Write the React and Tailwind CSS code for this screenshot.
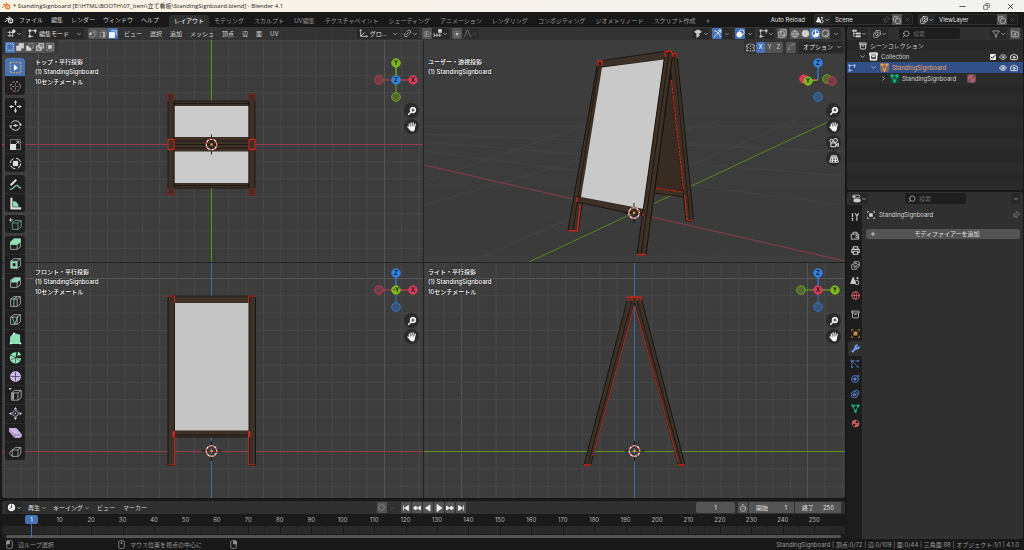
import React from 'react';
import {
  Archive, Camera, Check, ChevronDown, ChevronRight, Circle, Copy, Eye, Filter, Globe, Images,
  Magnet, Minus, Pin, Plus, Printer, Search, Timer, Wrench, X, FolderPlus, Spline, Link2,
} from 'lucide-react';

const GRID = 17.3;

const Chevron = ({ className = 'text-[#b5b5b5]' }) => (
  <ChevronDown className={`w-[6px] h-[6px] shrink-0 ${className}`} strokeWidth={3} />
);

/* Small svg wrapper, 16 unit canvas */
const Ico = ({ children, className = 'w-[10px] h-[10px]' }) => (
  <svg viewBox="0 0 16 16" className={`shrink-0 ${className}`} fill="none" stroke="currentColor" strokeWidth="1.4">
    {children}
  </svg>
);

const BlenderLogo = ({ className }) => (
  <svg viewBox="0 0 24 20" className={className} fill="none">
    <path d="M1 14 L12 6 H4.500 M10 1.500 L20 9" stroke="currentColor" strokeWidth="2.600" strokeLinecap="round" strokeLinejoin="round" />
    <circle cx="15" cy="12" r="5.500" stroke="currentColor" strokeWidth="3" />
    <circle cx="15" cy="12" r="1.900" fill="currentColor" />
  </svg>
);

const MenuButton = ({ children }) => (
  <button type="button" className="px-1 leading-3 whitespace-nowrap text-[#d5d5d5]">{children}</button>
);

const IconButton = ({ label, active, lit, children, className = 'w-[10px]' }) => (
  <button
    type="button"
    aria-label={label}
    className={`flex items-center justify-center h-[11px] shrink-0 rounded-[1px] ${className} ${
      active ? 'bg-[#4772b3] text-white' : lit ? 'bg-[#545454] text-[#cfcfcf]' : 'text-[#cfcfcf]'
    }`}
  >
    {children}
  </button>
);

const Dropdown = ({ label, icon, value, width }) => (
  <label className="flex items-center h-[11px] gap-[2px] px-[2px] rounded-[2px] bg-[#282828]">
    <span className="sr-only">{label}</span>
    {icon}
    <select className={`appearance-none h-[11px] bg-transparent outline-none text-[#e0e0e0] leading-[11px] ${width}`}>
      <option>{value}</option>
    </select>
    <Chevron />
  </label>
);

const SearchBox = ({ id }) => (
  <label htmlFor={id} className="flex items-center gap-[3px] w-[61px] h-[11px] px-[3px] rounded-[2px] bg-[#1d1d1d]">
    <Search className="w-[8px] h-[8px] shrink-0 text-[#c8c8c8] -scale-x-100" />
    <input id={id} type="text" aria-label="検索" placeholder="検索" className="w-full min-w-0 bg-transparent outline-none leading-[10px] placeholder:text-[#666]" />
  </label>
);

/* ---------- title bar and top bar ---------- */

const TitleBar = () => (
  <header className="flex items-center shrink-0 h-3 pl-[2px] bg-linear-to-r from-[#fcf3e2] via-[#f6f1ec] to-[#f2f3ef] text-[#222]">
    <BlenderLogo className="w-[9px] h-[8px] text-[#e0782a]" />
    <h1 className="ml-[2px] text-[6px] leading-3 whitespace-pre font-['Open_Sans','Noto_Sans_CJK_JP',sans-serif]">
      {'* StandingSignboard [E:\\HTML\\BOOTH\\07_Item\\立て看板\\StandingSignboard.blend] - Blender 4.1'}
    </h1>
    <div className="flex items-center gap-4 ml-auto mr-[9px]">
      <button type="button" aria-label="最小化"><Minus className="w-[9px] h-[9px]" /></button>
      <button type="button" aria-label="元に戻す"><Copy className="w-[7px] h-[7px] -scale-x-100" /></button>
      <button type="button" aria-label="閉じる"><X className="w-[9px] h-[9px]" /></button>
    </div>
  </header>
);

const WORKSPACES = [
  'レイアウト', 'モデリング', 'スカルプト', 'UV編集', 'テクスチャペイント', 'シェーディング',
  'アニメーション', 'レンダリング', 'コンポジティング', 'ジオメトリノード', 'スクリプト作成',
];

const SceneIcon = ({ className }) => (
  <Ico className={className}>
    <path d="M5 2 L9 12 H1 Z" fill="currentColor" />
    <circle cx="11" cy="10.500" r="3.300" />
    <circle cx="12" cy="3.500" r="1.200" fill="currentColor" />
  </Ico>
);

const IdBlock = ({ id, value, icon, width, pinned }) => (
  <div className="flex items-center h-[11px] rounded-[2px] bg-[#1d1d1d] border border-[#303030]">
    <button type="button" aria-label={`${value} を選択`} className="flex items-center w-4 h-full justify-center text-white bg-[#282828]">
      {icon}<Chevron />
    </button>
    <input id={id} aria-label={value} defaultValue={value} className={`pl-1 bg-transparent outline-none text-[#e0e0e0] leading-[9px] ${width}`} />
    {pinned && <Pin className="w-[8px] h-[8px] mr-[2px] rotate-45 text-[#666]" />}
    <IconButton label="複製" lit><Copy className="w-[8px] h-[8px]" /></IconButton>
    <IconButton label="削除"><X className="w-[7px] h-[7px] text-[#5a5a5a]" /></IconButton>
  </div>
);

const TopBar = () => (
  <div className="flex items-center shrink-0 h-[15px] bg-[#181818]">
    <BlenderLogo className="w-[9px] h-[8px] ml-[5px] mr-px text-[#e6e6e6]" />
    <nav className="flex items-center">
      {['ファイル', '編集', 'レンダー', 'ウィンドウ', 'ヘルプ'].map((m) => <MenuButton key={m}>{m}</MenuButton>)}
    </nav>
    <nav className="flex items-end h-full ml-[6px]">
      {WORKSPACES.map((w, i) => (
        <button
          key={w}
          type="button"
          className={`h-[12px] px-[5px] leading-3 rounded-t-[2px] whitespace-nowrap ${i === 0 ? 'bg-[#303030] text-white' : 'text-[#989898]'}`}
        >
          {w}
        </button>
      ))}
      <button type="button" aria-label="ワークスペースを追加" className="px-1 h-[12px] text-[#989898]"><Plus className="w-[6px] h-[6px]" /></button>
    </nav>
    <div className="flex items-center gap-[5px] ml-auto mr-[6px]">
      <button type="button" className="mr-1 whitespace-nowrap text-[#e0e0e0]">Auto Reload</button>
      <IdBlock id="scene" value="Scene" width="w-[51px]" pinned icon={<SceneIcon className="w-[8px] h-[8px]" />} />
      <IdBlock id="layer" value="ViewLayer" width="w-[62px]" icon={<Images className="w-[8px] h-[8px]" />} />
    </div>
  </div>
);

/* ---------- viewport header ---------- */

const SelectBoxIcon = ({ kind }) => (
  <Ico className="w-[8px] h-[8px]">
    {kind === 0 && <rect x="1.500" y="1.500" width="13" height="13" strokeDasharray="2 1.500" />}
    {kind === 1 && <path d="M6 1 H15 V10 H10 V15 H1 V6 H6 Z" fill="currentColor" />}
    {kind === 2 && <><path d="M6 1.500 H14.500 V10 H10" strokeDasharray="2 1.500" /><path d="M1 6 H6 V10 H10 V15 H1 Z" fill="currentColor" /></>}
    {kind === 3 && <path d="M6 1.500 H14.500 V10 H10 V14.500 H1.500 V6 H6 Z M6 6 H10 V10 H6 Z" strokeWidth="2.400" />}
    {kind === 4 && <><rect x="1.500" y="1.500" width="13" height="13" strokeDasharray="2 2" /><rect x="5" y="5" width="6" height="6" fill="currentColor" /></>}
  </Ico>
);

const EditIcon = ({ className = 'w-[9px] h-[9px]' }) => (
  <Ico className={className}>
    <path d="M4 3 H12 M4 13 H9 M3 4 V12 M13 4 V8" />
    <path d="M1 1 H5 V5 H1 Z M11 1 H15 V5 H11 Z M1 11 H5 V15 H1 Z" fill="currentColor" stroke="none" />
  </Ico>
);

const ViewportHeader = () => (
  <div className="absolute inset-x-0 top-0">
    <div className="flex items-center h-[13px] px-1 rounded-t-[3px] bg-[#303030]/75">
      <button type="button" aria-label="エディタータイプ" className="flex items-center justify-center w-[16px] h-[11px] rounded-[2px] bg-[#282828] text-[#e0e0e0]">
        <Ico className="w-[9px] h-[9px]"><path d="M1 6 H12 M1 12 H11 M5 3 V14 M10 5 V14" /><circle cx="12" cy="4" r="2.500" fill="currentColor" /></Ico>
        <Chevron />
      </button>
      <div className="mx-1 text-[#e0e0e0]">
        <Dropdown label="モード" icon={<EditIcon />} width="w-[35px]" value="編集モード" />
      </div>
      <div className="flex rounded-[2px] bg-[#545454]">
        <IconButton label="頂点選択"><Ico className="w-[8px] h-[8px]"><path d="M2 5 H11 V14 H2 Z M5 2 H14 V11" opacity="0.5" /><rect x="1" y="6" width="4" height="4" fill="currentColor" stroke="none" /></Ico></IconButton>
        <IconButton label="辺選択"><Ico className="w-[8px] h-[8px]"><path d="M2 5 H10 V14 H2 Z M4 2 H14 V11 L10 14" opacity="0.5" /><path d="M10 4 V15" strokeWidth="2.600" /></Ico></IconButton>
        <IconButton label="面選択" active><Ico className="w-[8px] h-[8px]"><path d="M1 5 H11 V15 H1 Z" fill="currentColor" /><path d="M4 1.500 H14.500 V11" /></Ico></IconButton>
      </div>
      <nav className="flex ml-[2px]">
        {['ビュー', '選択', '追加', 'メッシュ', '頂点', '辺', '面', 'UV'].map((m) => <MenuButton key={m}>{m}</MenuButton>)}
      </nav>

      <div className="flex items-center gap-[3px] ml-[74px]">
        <Dropdown
          label="座標系"
          width="w-[20px]"
          icon={<Ico className="w-[9px] h-[9px] text-[#e0e0e0]"><path d="M3 1 V13 H15 M3 13 L10 6 M1 3 L3 1 L5 3 M13 11 L15 13 L13 15" /></Ico>}
          value="グロ..."
        />
        <IconButton label="ピボット" className="w-[16px] bg-[#282828]"><Link2 className="w-[9px] h-[9px] -rotate-45" /><Chevron /></IconButton>
        <div className="flex">
          <IconButton label="スナップ" lit><Magnet className="w-[8px] h-[8px] rotate-45 text-[#999]" /></IconButton>
          <IconButton label="スナップ先" className="w-[17px] bg-[#282828]">
            <Ico className="w-[9px] h-[9px]"><path d="M1 11 H15 M2 7 V14 M7 8 V14 M12 8 V14" /><rect x="10" y="1" width="5" height="5" fill="currentColor" /></Ico>
            <Chevron />
          </IconButton>
        </div>
        <div className="flex">
          <IconButton label="プロポーショナル編集" lit><Ico className="w-[8px] h-[8px]"><circle cx="8" cy="8" r="6" opacity="0.4" /><circle cx="8" cy="8" r="2.200" fill="currentColor" /></Ico></IconButton>
          <IconButton label="減衰" className="w-[17px] bg-[#2c2c2c]"><Ico className="w-[9px] h-[9px] text-[#888]"><path d="M1 14 C6 14 5 2 8 2 C11 2 10 14 15 14" /></Ico><Chevron className="text-[#555]" /></IconButton>
        </div>
      </div>

      <div className="flex items-center gap-[3px] ml-auto">
        <IconButton label="表示と選択" className="w-[16px] bg-[#282828]">
          <Ico className="w-[9px] h-[9px]"><path d="M1 5 C4 1 10 1 13 5 C10 9 4 9 1 5 Z" fill="currentColor" /><path d="M5 8 L5 15 L10 11 Z" fill="currentColor" /></Ico><Chevron />
        </IconButton>
        <div className="flex">
          <IconButton label="ギズモ" active><Ico className="w-[9px] h-[9px]"><path d="M2 3 C8 4 12 8 13 14 M2 14 L14 2 M9 2 H14 V7" /></Ico></IconButton>
          <IconButton label="ギズモ設定" className="w-[10px] bg-[#282828]"><Chevron /></IconButton>
        </div>
        <div className="flex">
          <IconButton label="オーバーレイ" active><Ico className="w-[9px] h-[9px]"><circle cx="6" cy="10" r="4.500" fill="currentColor" /><circle cx="10" cy="6" r="4.500" /></Ico></IconButton>
          <IconButton label="オーバーレイ設定" className="w-[10px] bg-[#282828]"><Chevron /></IconButton>
        </div>
        <IconButton label="メッシュ表示" className="w-[16px] bg-[#282828]"><EditIcon /><Chevron /></IconButton>
        <IconButton label="透過" lit><Ico className="w-[9px] h-[9px]"><path d="M1.500 5 H11 V14.500 H1.500 Z M5 1.500 H14.500 V11 H5 Z" /></Ico></IconButton>
        <div className="flex">
          <IconButton label="ワイヤーフレーム" lit><Globe className="w-[8px] h-[8px]" /></IconButton>
          <IconButton label="ソリッド" lit><Ico className="w-[9px] h-[9px]"><circle cx="8" cy="8" r="6" fill="currentColor" /></Ico></IconButton>
          <IconButton label="マテリアル" active><Ico className="w-[9px] h-[9px]"><circle cx="8" cy="8" r="6" /><path d="M8 2 V8 H14 A6 6 0 0 1 4 12.500 L8 8 Z" fill="currentColor" /></Ico></IconButton>
          <IconButton label="レンダー" lit><Ico className="w-[9px] h-[9px]"><circle cx="8" cy="8" r="6" /><path d="M11 8 A3.500 3.500 0 0 1 7 12" /></Ico></IconButton>
          <IconButton label="シェーディング設定" className="w-[11px] bg-[#282828]"><Chevron /></IconButton>
        </div>
      </div>
    </div>

    <div className="flex items-center justify-between h-[14px]">
      <div className="flex items-center h-full px-[3px] rounded-br-[3px] bg-[#303030]/75">
        <div className="flex rounded-[2px] bg-[#545454]">
          {[0, 1, 2, 3, 4].map((k) => (
            <IconButton key={k} label={`選択モード ${k + 1}`} active={k === 0}><SelectBoxIcon kind={k} /></IconButton>
          ))}
        </div>
      </div>
      <div className="flex items-center h-full gap-[3px] px-[2px] rounded-bl-[3px] bg-[#303030]/75">
        <div className="flex">
          <IconButton label="ミラー"><Ico className="w-[9px] h-[9px]"><path d="M8 1 V15" strokeDasharray="2 2" /><path d="M6 2 L1 4 V7 L4 8 L1 11 V14 H6 M10 2 L15 4 V7 L12 8 L15 11 V14 H10" /></Ico></IconButton>
          <IconButton label="X" active className="w-[9px]">X</IconButton>
          <IconButton label="Y" lit className="w-[9px]">Y</IconButton>
          <IconButton label="Z" lit className="w-[9px]">Z</IconButton>
        </div>
        <IconButton label="自動マージ" lit><Spline className="w-[8px] h-[8px] text-[#999]" /></IconButton>
        <button type="button" className="flex items-center gap-[3px] h-[11px] pl-1 pr-px rounded-[2px] bg-[#282828] text-[#e0e0e0]">オプション<Chevron /></button>
      </div>
    </div>
  </div>
);

/* ---------- tool shelf ---------- */

const cubePath = 'M2 5 H10 V14 H2 Z M2 5 L6 2 H14 V11 L10 14 M10 5 L14 2';
const Cube = () => <path d={cubePath} stroke="#b4b4b4" strokeWidth="1" />;
const G = '#8fe0b4';
const P = '#cdb8e8';

const TOOL_GROUPS = [
  {
    height: 'h-[37px]',
    tools: [
      ['ボックス選択', <><rect x="1.500" y="1.500" width="13" height="13" stroke="#e0b060" strokeDasharray="2 1.300" /><path d="M6 4 L11 8.500 L6 12 Z" fill="#fff" stroke="none" /></>],
      ['カーソル', <><circle cx="8" cy="8" r="6" stroke="#d9a0a0" strokeWidth="1.200" strokeDasharray="2.700 2" /><path d="M8 4 V7 M8 9 V12 M4 8 H7 M9 8 H12" stroke="#999" strokeWidth="0.900" /></>],
    ],
  },
  {
    height: 'h-[74px]',
    tools: [
      ['移動', <><path d="M8 3 V6 M8 10 V13 M3 8 H6 M10 8 H13" /><path d="M8 0 L10 3.500 H6 Z M8 16 L10 12.500 H6 Z M0 8 L3.500 6 V10 Z M16 8 L12.500 6 V10 Z" fill="currentColor" stroke="none" /></>],
      ['回転', <><circle cx="8" cy="8" r="6" strokeWidth="1.100" strokeDasharray="14 4.800" strokeDashoffset="-2" /><path d="M5 8 H11" strokeWidth="1" /><circle cx="8" cy="8" r="1.500" fill="currentColor" stroke="none" /><path d="M0 8 L4 8 L2 11 Z M12 8 H16 L14 5 Z" fill="currentColor" stroke="none" /></>],
      ['スケール', <><rect x="2" y="2" width="12" height="12" stroke="#888" strokeWidth="1" /><path d="M2 8 H8 V14 H2 Z" fill="currentColor" /><path d="M8 8 L12 4 M9 4 H12 V7" strokeWidth="1" /></>],
      ['トランスフォーム', <><circle cx="8" cy="8" r="6.500" strokeWidth="1.200" strokeDasharray="7 3.200" /><rect x="5.500" y="5.500" width="5" height="5" fill="currentColor" /></>],
    ],
  },
  {
    height: 'h-[37px]',
    tools: [
      ['アノテート', <><path d="M2 9 L9 2" strokeWidth="2.600" /><path d="M1 14 C6 15 7 8 10 9 C12 10 12 13 15 12" stroke={G} /></>],
      ['メジャー', <><path d="M3 1 V14 H15" strokeWidth="2.600" /><path d="M5 5 A8 8 0 0 1 12 12 H5 Z" fill={G} stroke="none" /></>],
    ],
  },
  {
    height: 'h-[18px]',
    tools: [['立方体を追加', <><path d="M4 6 H11 V14 H4 Z M4 6 L7 3 H15 V11 L11 14 M11 6 L15 3" stroke="#6fae8c" strokeWidth="1" /><path d="M2 0 V5 M0 2.500 H5" strokeWidth="1" /></>]],
  },
  {
    height: 'h-[224px]',
    tools: [
      ['押し出し', <><Cube /><path d="M2 5 L6 1 H14 V5 L10 8 H2 Z" fill={G} stroke={G} strokeWidth="1" /></>],
      ['面を差し込む', <><Cube /><rect x="3.500" y="6.500" width="5.500" height="6" stroke={G} strokeWidth="2.200" /></>],
      ['ベベル', <><Cube /><path d="M2 8 L4 4 L8 2 H13 L14 5 L10 8 Z" fill={G} stroke="none" /></>],
      ['ループカット', <><Cube /><path d="M6 5 V14 M6 5 L10 2" stroke={G} strokeWidth="1" /></>],
      ['ナイフ', <><Cube /><path d="M4 5 L7 14 L11 4" stroke={G} strokeWidth="1" /></>],
      ['ポリビルド', <><path d="M2 14 V6 L6 2 L13 4 V14 Z" fill={G} stroke={G} /><path d="M1 13 H3 V15 H1 Z M13 13 H15 V15 H13 Z M5 1 H7 V3 H5 Z" fill="#fff" stroke="none" /></>],
      ['スピン', <><path d="M8 8 V1.500 A7 7 0 1 0 15 8 Z" fill={G} stroke="none" transform="rotate(10 8 8)" /><path d="M8 8 L2 5 M8 8 L2 11 M8 8 V15 M8 8 L13 12" stroke="#232323" strokeWidth="0.700" /><path d="M10 6 L11 1 C13 2 14 3 15 5 Z" fill={G} stroke="none" /></>],
      ['スムーズ', <><circle cx="8" cy="8" r="6" fill={P} stroke={P} /><path d="M2 8 H14 M8 2 V14" stroke="#4a3c60" strokeWidth="1" /></>],
      ['辺をスライド', <><path d={cubePath} stroke="#b4b4b4" strokeWidth="1" transform="translate(1 1)" /><path d="M5 6 V14" strokeWidth="1.600" /><path d="M0 1 H3" /></>],
      ['収縮/膨張', <><circle cx="8" cy="8" r="3.500" stroke={P} strokeWidth="1" /><path d="M8 0 L10 3 H6 Z M8 16 L10 13 H6 Z M0 8 L3 6 V10 Z M16 8 L13 6 V10 Z" fill="currentColor" stroke="none" /><circle cx="8" cy="8" r="1" fill="currentColor" stroke="none" /></>],
      ['せん断', <><path d="M0 3 L9 3 L16 11 L14 14 H7 L0 6 Z" fill={P} stroke={P} strokeWidth="1" /><path d="M0 4 L7 11 H15 M7 11 V14" stroke="#6b5a88" strokeWidth="0.800" /></>],
      ['領域リップ', <><path d="M4 6 L8 3 H14.500 V11 L11 14 H4 Z M4 6 H11 V14 M11 6 L14.500 3 M4 6 L0 10 L4 14" stroke="#b4b4b4" strokeWidth="1" /></>],
    ],
  },
];

const ToolShelf = () => (
  <div className="absolute left-[3px] top-[31px] flex flex-col gap-[3px] text-[#e0e0e0]">
    {TOOL_GROUPS.map((g) => (
      <div key={g.tools[0][0]} className={`flex flex-col w-[20px] rounded-[3px] overflow-hidden bg-[#1f1f1f] ${g.height}`}>
        {g.tools.map(([name, shape]) => (
          <button
            key={name}
            type="button"
            aria-label={name}
            className={`flex flex-1 items-center justify-center border-b border-[#2c2c2c] last:border-0 ${name === 'ボックス選択' ? 'bg-[#4772b3]' : ''}`}
          >
            <Ico className="w-[13px] h-[13px]">{shape}</Ico>
          </button>
        ))}
      </div>
    ))}
  </div>
);

/* ---------- scene drawings, one per quadrant ---------- */

const OrthoGrid = ({ x, y, w, h, cx, cy, hor, ver }) => {
  const lines = [];
  for (let i = -26; i <= 26; i++) {
    if (i === 0) continue;
    const gx = cx + i * GRID;
    const gy = cy + i * GRID;
    const c = i % 10 === 0 ? '#565656' : '#494949';
    if (gx > x && gx < x + w) lines.push(<path key={`v${i}`} d={`M${gx} ${y} V${y + h}`} stroke={c} />);
    if (gy > y && gy < y + h) lines.push(<path key={`h${i}`} d={`M${x} ${gy} H${x + w}`} stroke={c} />);
  }
  return (
    <g strokeWidth="1">
      {lines}
      <path d={`M${x} ${cy} H${x + w}`} stroke={hor} />
      <path d={`M${cx} ${y} V${y + h}`} stroke={ver} />
    </g>
  );
};

const Cursor3D = ({ x, y }) => (
  <g transform={`translate(${x} ${y})`} fill="none">
    <path d="M0 -10 V-3 M0 3 V10 M-10 0 H-3 M3 0 H10" stroke="#111" strokeWidth="0.900" />
    <circle r="5.300" stroke="#fff" strokeWidth="1.100" />
    <circle r="5.300" stroke="#d33" strokeWidth="1.100" strokeDasharray="2.080 2.080" />
    <circle r="1.200" fill="#f5a030" />
  </g>
);

const WOOD = '#3d3127';
const EDGE = '#14100d';
const RED = '#c8261c';

const AXIS_X = '#953c4c';
const AXIS_Y = '#5f8f1c';
const AXIS_Z = '#3b6ea5';

const TopScene = () => (
  <>
    <OrthoGrid x={2} y={27} w={421} h={235} cx={211.5} cy={144.5} hor={AXIS_X} ver={AXIS_Y} />
    <rect x="174" y="101" width="75" height="87" fill={WOOD} stroke={EDGE} strokeWidth="0.700" />
    <path d="M174.500 106 H248.500 V137 H174.500 Z M174.500 151.500 H248.500 V183 H174.500 Z" fill="#cbcbcb" />
    <path d="M174 103.500 H249 M174 141 H249 M174 144.500 H249 M174 148 H249 M174 185.500 H249" stroke={EDGE} strokeWidth="0.700" />
    {[168, 249].map((x) => (
      <g key={x}>
        <rect x={x} y="94" width="6" height="101" fill={WOOD} stroke={EDGE} strokeWidth="0.700" />
        <path d={`M${x} 101 V94 H${x + 6} V101 M${x} 188 V195 H${x + 6} V188`} fill="none" stroke="#9c2a22" strokeWidth="1" />
        <rect x={x} y="139.500" width="6" height="10" fill="none" stroke={RED} strokeWidth="1.300" />
      </g>
    ))}
    <Cursor3D x={211.5} y={144.5} />
  </>
);

const FrontScene = () => (
  <>
    <OrthoGrid x={2} y={263} w={421} h={235} cx={211.5} cy={451.5} hor={AXIS_X} ver={AXIS_Z} />
    <rect x="174" y="296" width="75" height="141" fill={WOOD} stroke={EDGE} strokeWidth="0.700" />
    <rect x="174.500" y="303" width="74.500" height="127.500" fill="#c6c6c6" />
    <path d="M174 435 H249" stroke={EDGE} strokeWidth="0.800" />
    {[168, 249].map((x) => (
      <rect key={x} x={x} y="296" width="6.500" height="169.500" fill={WOOD} stroke={EDGE} strokeWidth="0.900" />
    ))}
    <path d="M167.500 297 V296 H174.500 V303 M255.500 297 V296 H248.500 V303 M174.500 431 V465 H168 M248.500 431 V465 H255.500" fill="none" stroke="#b02a22" strokeWidth="1.100" />
    <path d="M173.500 431 V437 M249.500 431 V437" stroke={RED} strokeWidth="2" />
    <Cursor3D x={211.5} y={451} />
  </>
);

const RightScene = () => (
  <>
    <OrthoGrid x={424} y={263} w={421} h={235} cx={634.5} cy={451.5} hor={AXIS_Y} ver={AXIS_Z} />
    <path d="M628 297 H641 L685 465 L678.500 465.500 L634.500 303 L590.500 465.500 L584 465 Z" fill={WOOD} stroke={EDGE} strokeWidth="0.900" />
    <path d="M632 300 L588 464 M637 300 L681.500 464" stroke={EDGE} strokeWidth="0.700" />
    <path d="M635 306 L678 462 M634 306 L593 456" fill="none" stroke="#b02a22" strokeWidth="1" />
    <path d="M628 301 V297 H641 V301 M632 297 V301 M637 297 V301 M584 465 H591 M678 465 H685" fill="none" stroke={RED} strokeWidth="1.300" />
    <Cursor3D x={634.5} y={451} />
  </>
);

const UserScene = () => (
  <>
    <g stroke="#484848" strokeWidth="0.800">
      <path d="M424 134 L845 152 M424 142 L845 176 M424 151 L845 205 M424 182 L600 120 M424 205 L720 120 M424 126 H845 M620 140 L845 152 M470 262 L800 118" opacity="0.700" />
      <path d="M424 193 L560 224 L720 262 M700 262 L845 190" opacity="0.300" />
    </g>
    <path d="M424 165 L845 261" stroke={AXIS_X} strokeWidth="0.900" />
    <path d="M529 262 L830 121" stroke={AXIS_Y} strokeWidth="0.900" />
    {/* rear board and its leg */}
    <path d="M671 72 L684 191 L655 188 Z" fill="#382c22" stroke={EDGE} strokeWidth="0.600" />
    <path d="M655 188 L684 192 V197 L654 193 Z" fill={WOOD} stroke={EDGE} strokeWidth="0.700" />
    <path d="M669 53 L677 54 L693.500 219 L691 221.500 L686 221 Z" fill={WOOD} stroke={EDGE} strokeWidth="0.900" />
    <path d="M674 54 L690 220" stroke={EDGE} strokeWidth="0.700" />
    <path d="M671.500 80 L683.500 190 M656 188 L683 192 M684.500 195 L687 220" stroke={RED} strokeWidth="1.200" strokeDasharray="3 0.700" />
    <path d="M672 53 L677 54 V58 M687 221 L693 220" fill="none" stroke={RED} strokeWidth="1.200" />
    {/* front board */}
    <path d="M598 61 L603 66 L578 231 L568 230 Z" fill={WOOD} stroke={EDGE} strokeWidth="0.900" />
    <path d="M599 63 L573 230" stroke={EDGE} strokeWidth="0.700" />
    <path d="M599 61 L667 51 L665 60 L602 67 Z" fill={WOOD} stroke={EDGE} strokeWidth="0.800" />
    <path d="M577.500 196 L643 209 L642 216 L577 202 Z" fill={WOOD} stroke={EDGE} strokeWidth="0.800" />
    <path d="M602 67.500 L664 59.500 L643.500 209 L581 197 Z" fill="#c9c9c9" />
    <path d="M665 53 L673 52 L646 255 L637 254 Z" fill={WOOD} stroke={EDGE} strokeWidth="0.900" />
    <path d="M669 53 L641 254" stroke={EDGE} strokeWidth="0.800" />
    <path d="M598 66 V61 H602 V66 M665 57 V52 L671 51 L673 54 V57 M577 197 V202 M643 212 V216 M580.500 204 L577.500 231 L568.500 230.500 M637 254.500 H646" fill="none" stroke={RED} strokeWidth="1.400" />
    <Cursor3D x={634} y={213} />
  </>
);

const AXIS = { r: '#d63c58', g: '#7fb81c', b: '#2f83e3' };

/* balls: [x, y, colour key, label, solid] */
const GIZMOS = {
  top: [[-17, 0, 'r', '', false], [0, 17, 'g', '', false], [17, 0, 'r', 'X', true], [0, -17, 'g', 'Y', true], [0, 0, 'b', 'Z', true]],
  front: [[-17, 0, 'r', '', false], [0, 17, 'b', '', false], [17, 0, 'r', 'X', true], [0, -17, 'b', 'Z', true], [0, 0, 'g', '-Y', true]],
  right: [[-17, 0, 'g', '', false], [0, 17, 'b', '', false], [17, 0, 'g', 'Y', true], [0, -17, 'b', 'Z', true], [0, 0, 'r', 'X', true]],
  user: [[9, -1, 'g', '', false], [14, 1, 'r', '', false], [0, 17, 'b', '', false], [0, -17, 'b', 'Z', true], [-14, -1, 'r', '', true], [-10, 1, 'g', 'Y', true]],
};

const NavGizmo = ({ view }) => (
  <svg viewBox="-23 -22 46 44" className="w-[46px] h-[44px]">
    {GIZMOS[view].filter((b) => !b[4] && view !== 'user').map(([x, y, c]) => (
      <path key={`b${x}${y}`} d={`M0 0 L${x} ${y}`} stroke={AXIS[c]} strokeWidth="1" opacity="0.800" />
    ))}
    {GIZMOS[view].filter((b) => b[4]).map(([x, y, c]) => (
      <path key={`l${x}${y}`} d={`M0 0 L${x} ${y}`} stroke={AXIS[c]} strokeWidth="1.200" />
    ))}
    {GIZMOS[view].map(([x, y, c, label, solid]) => (
      <g key={`${x}${y}`}>
        {!solid && <circle cx={x} cy={y} r="4.300" fill="#3d3d3d" />}
        <circle cx={x} cy={y} r="4.300" fill={AXIS[c]} fillOpacity={solid ? 1 : 0.35} stroke={AXIS[c]} strokeWidth="0.800" />
        {label && <text x={x} y={y + 2} textAnchor="middle" fontSize="6" fontWeight="600" fill="#111">{label}</text>}
      </g>
    ))}
  </svg>
);

const NavButton = ({ label, children }) => (
  <button type="button" aria-label={label} className="flex items-center justify-center w-[15px] h-[15px] rounded-full bg-[#2a2a2a] text-white">
    {children}
  </button>
);

const HandIcon = () => (
  <Ico className="w-[10px] h-[10px]">
    <path d="M4 8 L3.500 3.500 M6.700 7 L6.500 1.500 M9.500 7 L10 1.500 M12 8 L13.300 3.500 M4.500 11 L1.500 8" strokeWidth="1.900" strokeLinecap="round" />
    <path d="M3.500 7 H13 C13 12 12 15 8.500 15 C5.500 15 4 12.500 3.500 10 Z" fill="currentColor" stroke="none" />
  </Ico>
);

const Quad = ({ viewBox, view, lines, top, label, children }) => (
  <section aria-label={label} className="relative min-w-0 min-h-0 overflow-hidden bg-[#3d3d3d]">
    <svg viewBox={viewBox} preserveAspectRatio="xMidYMid slice" className="block w-full h-full">{children}</svg>
    <div className={`absolute font-medium leading-[10px] text-white [text-shadow:0_0_2px_#000] ${top ? 'top-[30px]' : 'top-[4px]'} ${view === 'top' || view === 'front' ? 'left-[33px]' : 'left-[4px]'}`}>
      {lines.map((l) => <p key={l}>{l}</p>)}
    </div>
    <div className={`absolute right-[4px] flex flex-col items-end gap-px ${top ? 'top-[31px]' : 'top-[5px]'}`}>
      <NavGizmo view={view} />
      <NavButton label="ズーム"><Ico className="w-[10px] h-[10px]"><circle cx="9.500" cy="6.500" r="4.500" fill="#eee" /><path d="M6 10 L2 14" strokeWidth="2.400" /><path d="M7 6.500 H12 M9.500 4 V9" stroke="#2a2a2a" /></Ico></NavButton>
      <NavButton label="移動"><HandIcon /></NavButton>
      {view === 'user' && (
        <>
          <NavButton label="カメラ視点">
            <Ico className="w-[10px] h-[10px]"><circle cx="4" cy="4.500" r="2.500" /><circle cx="10.500" cy="4" r="3" /><path d="M3 8 H11 V14 H3 Z M11 11 L15 8.500 V13.500 Z" /></Ico>
          </NavButton>
          <NavButton label="透視投影">
            <Ico className="w-[10px] h-[10px]"><path d="M4 3 H12 L15 13 H1 Z M3 6.500 H13 M2 10 H14 M6.500 3 L5.500 13 M9.500 3 L10.500 13" /></Ico>
          </NavButton>
        </>
      )}
    </div>
  </section>
);

const OBJ = '(1) StandingSignboard';
const UNIT = '10センチメートル';

const Viewport = () => (
  <main className="relative flex-1 min-h-0 rounded-[3px] overflow-hidden bg-[#222]">
    <div className="grid grid-cols-2 grid-rows-2 gap-px w-full h-full">
      <Quad top view="top" label="トップ" viewBox="2 27 421 235" lines={['トップ・平行投影', OBJ, UNIT]}><TopScene /></Quad>
      <Quad top view="user" label="ユーザー" viewBox="424 27 421 235" lines={['ユーザー・透視投影', OBJ]}><UserScene /></Quad>
      <Quad view="front" label="フロント" viewBox="2 263 421 235" lines={['フロント・平行投影', OBJ, UNIT]}><FrontScene /></Quad>
      <Quad view="right" label="ライト" viewBox="424 263 421 235" lines={['ライト・平行投影', OBJ, UNIT]}><RightScene /></Quad>
    </div>
    <ViewportHeader />
    <ToolShelf />
  </main>
);

/* ---------- timeline ---------- */

const PLAY_ICONS = [
  ['先頭へ', 'M3 3 V13 M13 3 L5 8 L13 13 Z'],
  ['前のキー', 'M5 4 L1 8 L5 12 L9 8 Z M15 4 L9 8 L15 12 Z'],
  ['逆再生', 'M12 2 L3 8 L12 14 Z'],
  ['再生', 'M4 1 L14 8 L4 15 Z'],
  ['次のキー', 'M1 4 L7 8 L1 12 Z M11 4 L7 8 L11 12 L15 8 Z'],
  ['末尾へ', 'M13 3 V13 M3 3 L11 8 L3 13 Z'],
];

const NumberField = ({ id, label, value, width, pad }) => (
  <label htmlFor={id} className={`flex items-center justify-between h-[11px] bg-[#545454] ${width} ${pad}`}>
    {label && <span className="shrink-0">{label}</span>}
    <input id={id} aria-label={label || '現在のフレーム'} defaultValue={value} className={`min-w-0 bg-transparent outline-none leading-[10px] ${label ? 'w-[14px] text-right' : 'w-full text-center'}`} />
  </label>
);

const FRAMES = Array.from({ length: 25 }, (_, i) => (i + 1) * 10);

const Timeline = () => (
  <section aria-label="タイムライン" className="shrink-0 rounded-[3px] overflow-hidden bg-[#232323] text-[#e0e0e0]">
    <div className="flex items-center h-[13px] px-1 bg-[#303030]">
      <button type="button" aria-label="エディタータイプ" className="flex items-center justify-center w-[16px] h-[11px] rounded-[2px] bg-[#282828]">
        <Ico className="w-[9px] h-[9px]"><circle cx="8" cy="8" r="6.500" fill="#eee" stroke="none" /><path d="M8 3 V8 L5 10" stroke="#222" /></Ico>
        <Chevron />
      </button>
      <nav className="flex items-center ml-[3px]">
        <button type="button" className="flex items-center gap-px px-[3px] leading-[11px]">再生<Chevron /></button>
        <button type="button" className="flex items-center gap-px px-[3px] leading-[11px]">キーイング<Chevron /></button>
        <MenuButton>ビュー</MenuButton>
        <MenuButton>マーカー</MenuButton>
      </nav>
      <div className="flex flex-1 justify-center pr-[5px]">
        <IconButton label="自動キー" lit><Circle className="w-[7px] h-[7px] text-[#999]" /></IconButton>
        <IconButton label="自動キー設定" className="w-[10px] mr-1"><Chevron className="text-[#555]" /></IconButton>
        <div className="flex gap-px text-white">
          {PLAY_ICONS.map(([name, d]) => (
            <IconButton key={name} label={name} lit>
              <Ico className="w-[8px] h-[8px] text-[#f0f0f0]"><path d={d} fill="currentColor" strokeWidth="1.600" /></Ico>
            </IconButton>
          ))}
        </div>
      </div>
      <div className="flex items-center gap-[3px]">
        <NumberField id="frame" value="1" width="w-[39px]" pad="rounded-[2px]" />
        <div className="flex gap-px">
          <IconButton label="プレビュー範囲" lit><Timer className="w-[8px] h-[8px]" /></IconButton>
          <NumberField id="start" label="開始" value="1" width="w-[45px]" pad="px-[7px]" />
          <NumberField id="end" label="終了" value="250" width="w-[46px]" pad="px-[7px]" />
        </div>
      </div>
    </div>
    <div className="relative">
      <div className="flex h-[20px] pl-[42px] pr-[15px] bg-linear-to-b from-[#1a1a1a] from-60% to-[#262626] to-60%">
        {FRAMES.map((f) => (
          <div key={f} className="flex flex-col items-center flex-1 min-w-0 text-[#b5b5b5]">
            <span className="leading-3">{f}</span>
            <span className="w-full flex-1 border-l border-[#222] flex justify-center bg-[#292929]"><i className="w-px h-full bg-[#1a1a1a]" /></span>
          </div>
        ))}
      </div>
      <div className="flex items-center h-[5px] px-[4px] bg-[#1d1d1d]">
        <div className="w-full h-[3px] rounded-full bg-[#545454]" />
      </div>
      {/* playhead */}
      <div className="absolute top-px left-[23px] flex flex-col items-center w-[13px]">
        <span className="w-full text-center leading-[9px] rounded-[2px] bg-[#4772b3] text-white">1</span>
        <span className="w-px h-[14px] bg-[#4772b3]" />
      </div>
    </div>
  </section>
);

/* ---------- outliner ---------- */

const MeshIcon = ({ className = 'w-[8px] h-[8px]' }) => (
  <Ico className={className}>
    <path d="M3 3 H13 L8 14 Z" />
    <path d="M1 1 H5 V5 H1 Z M11 1 H15 V5 H11 Z M6 11 H10 V15 H6 Z" fill="currentColor" stroke="none" />
  </Ico>
);

const MaterialIcon = ({ className = 'w-[9px] h-[9px]' }) => (
  <Ico className={className}><circle cx="8" cy="8" r="6" /><path d="M8 2 V8 H2 A6 6 0 0 1 8 2 Z M8 8 H14 A6 6 0 0 1 8 14 Z" fill="currentColor" /></Ico>
);

const Outliner = () => (
  <section aria-label="アウトライナー" className="flex flex-col shrink-0 h-[163px] rounded-[3px] overflow-hidden bg-[#282828] text-[#cfcfcf]">
    <div className="flex items-center h-[13px] pl-1 pr-[3px] bg-[#303030]">
      <IconButton label="エディタータイプ" className="w-[17px] bg-[#282828]">
        <Ico className="w-[9px] h-[9px]"><path d="M3 3 V13 H6 M3 8 H6" /><path d="M1 2 H8 V4 H1 Z M7 7 H15 V9 H7 Z M7 12 H15 V14 H7 Z" fill="currentColor" /></Ico><Chevron />
      </IconButton>
      <IconButton label="表示モード" className="w-[17px] ml-[3px] bg-[#282828]"><Images className="w-[8px] h-[8px]" /><Chevron /></IconButton>
      <div className="ml-[11px] mr-auto"><SearchBox id="outliner-search" /></div>
      <IconButton label="フィルター" className="w-[17px] mr-[3px] bg-[#282828]"><Filter className="w-[8px] h-[8px]" /><Chevron /></IconButton>
      <IconButton label="新規コレクション" lit><FolderPlus className="w-[8px] h-[8px]" /></IconButton>
    </div>
    <ul className="flex-1 leading-[11px] bg-[repeating-linear-gradient(to_bottom,#282828_0_11px,#2b2b2b_11px_22px)]">
      <li className="flex items-center gap-[3px] h-[11px] pl-3"><Archive className="w-[8px] h-[8px]" strokeWidth={3} />シーンコレクション</li>
      <li className="flex items-center gap-[3px] h-[11px] pl-3 pr-[5px]">
        <ChevronDown className="w-[7px] h-[7px]" strokeWidth={2.5} />
        <span className="rounded-[2px] bg-[#555]"><Archive className="w-[9px] h-[9px] text-white" strokeWidth={3} /></span>
        Collection
        <span className="flex items-center gap-[3px] ml-auto">
          <span className="relative flex">
            <input type="checkbox" defaultChecked aria-label="Collection を有効化" className="appearance-none w-[6px] h-[6px] rounded-[1px] bg-[#eee]" />
            <Check className="absolute inset-0 w-[6px] h-[6px] text-black pointer-events-none" strokeWidth={4} />
          </span>
          <Eye className="w-[8px] h-[8px]" strokeWidth={2.5} />
          <Camera className="w-[8px] h-[8px] text-white" strokeWidth={2.5} />
        </span>
      </li>
      <li className="flex items-center gap-[3px] h-[11px] pl-px pr-[5px] bg-[#334f87] text-[#eba35a]">
        <EditIcon className="w-[8px] h-[8px] text-[#9fc3ff]" />
        <ChevronDown className="w-[7px] h-[7px] ml-[11px] text-[#cfcfcf]" strokeWidth={2.5} />
        <span className="rounded-[2px] bg-[#7b6a63]"><MeshIcon className="w-[9px] h-[9px]" /></span>
        StandingSignboard
        <span className="flex items-center gap-[3px] ml-auto text-white">
          <Eye className="w-[8px] h-[8px]" strokeWidth={2.5} />
          <Camera className="w-[8px] h-[8px]" strokeWidth={2.5} />
        </span>
      </li>
      <li className="flex items-center gap-[3px] h-[11px] pl-[33px]">
        <ChevronRight className="w-[7px] h-[7px]" strokeWidth={2.5} />
        <span className="rounded-[2px] bg-[#164a3a] text-[#18c48c]"><MeshIcon className="w-[9px] h-[9px]" /></span>
        StandingSignboard
        <span className="ml-2 rounded-[2px] bg-[#555] text-[#c45a68]"><MaterialIcon /></span>
      </li>
    </ul>
  </section>
);

/* ---------- properties ---------- */

const ObjIcon = ({ className = 'w-[9px] h-[9px]' }) => (
  <Ico className={className}><path d="M1 4 V1 H4 M12 1 H15 V4 M15 12 V15 H12 M4 15 H1 V12" /><rect x="4.500" y="4.500" width="7" height="7" fill="currentColor" stroke="none" /></Ico>
);

const TAB_GROUPS = [
  [['ツール', 'text-[#cfcfcf]', <Ico><path d="M4 2 V8 M4 9 V14" strokeWidth="2" /><path d="M8 2 L11 6 L14 2 M11 6 V14" strokeWidth="1.800" /></Ico>]],
  [
    ['レンダー', 'text-[#cfcfcf]', <Ico><path d="M2 5 H14 V13 H2 Z M5 5 V2 H11 V5" /><circle cx="11" cy="9" r="1.800" /></Ico>],
    ['出力', 'text-[#cfcfcf]', <Printer className="w-[9px] h-[9px]" strokeWidth={3} />],
    ['ビューレイヤー', 'text-[#cfcfcf]', <Images className="w-[9px] h-[9px]" />],
    ['シーン', 'text-[#cfcfcf]', <SceneIcon />],
    ['ワールド', 'text-[#cc5a66]', <Globe className="w-[9px] h-[9px]" strokeWidth={2.5} />],
  ],
  [['コレクション', 'text-[#cfcfcf]', <Archive className="w-[9px] h-[9px]" />]],
  [
    ['オブジェクト', 'text-[#d08848]', <ObjIcon />],
    ['モディファイアー', 'text-[#6fa0f0]', <Wrench className="w-[9px] h-[9px]" fill="currentColor" />],
    ['パーティクル', 'text-[#5a86d8]', <Ico><path d="M3 3 L12 12 M3 3 H13 M3 3 V13" strokeWidth="1" /><circle cx="3" cy="3" r="1.500" /><circle cx="12.500" cy="12.500" r="1" /><circle cx="13" cy="3" r="1" /><circle cx="3" cy="13" r="1" /></Ico>],
    ['物理演算', 'text-[#5a86d8]', <Ico><circle cx="8" cy="8" r="5.500" /><circle cx="8" cy="8" r="2" fill="currentColor" /><circle cx="13" cy="3" r="1" /></Ico>],
    ['コンストレイント', 'text-[#5a86d8]', <Ico><circle cx="7" cy="9" r="5" /><circle cx="7" cy="9" r="1.800" fill="currentColor" /><path d="M6 4 L11 1.500 L15 5 L12 10" /></Ico>],
    ['データ', 'text-[#18c48c]', <MeshIcon className="w-[9px] h-[9px]" />],
    ['マテリアル', 'text-[#cc5a66]', <MaterialIcon />],
  ],
];

const Properties = () => (
  <section aria-label="プロパティ" className="flex flex-col flex-1 min-h-0 rounded-[3px] overflow-hidden bg-[#303030] text-[#d5d5d5]">
    <div className="flex items-center shrink-0 h-[13px] pl-1 pr-[3px]">
      <IconButton label="エディタータイプ" className="w-[17px] bg-[#282828]">
        <Ico className="w-[9px] h-[9px]"><rect x="1" y="2" width="13" height="5" rx="2.500" /><rect x="3" y="9" width="12" height="5" rx="2.500" fill="currentColor" /><circle cx="4" cy="4.500" r="1.500" fill="currentColor" /></Ico><Chevron />
      </IconButton>
      <div className="ml-[37px] mr-auto"><SearchBox id="properties-search" /></div>
      <IconButton label="オプション" className="w-[9px] bg-[#282828]"><Chevron /></IconButton>
    </div>
    <div className="flex flex-1 min-h-0">
      <nav className="flex flex-col gap-1 w-[15px] shrink-0 pt-[4px] pl-px bg-[#1d1d1d]">
        {TAB_GROUPS.map((group) => (
          <div key={group[0][0]}>
            {group.map(([name, color, icon]) => (
              <button
                key={name}
                type="button"
                aria-label={name}
                className={`flex items-center justify-center w-full h-[15px] rounded-l-[2px] ${color} ${name === 'モディファイアー' ? 'bg-[#303030]' : ''}`}
              >
                {icon}
              </button>
            ))}
          </div>
        ))}
      </nav>
      <div className="flex-1 min-w-0 pt-1 pl-1 pr-[3px]">
        <div className="flex items-center gap-[4px] h-3 pl-px">
          <ObjIcon className="w-[8px] h-[8px]" />
          StandingSignboard
          <button type="button" aria-label="ピン" className="ml-auto"><Pin className="w-[8px] h-[8px] rotate-45 text-[#999]" /></button>
        </div>
        <button type="button" className="relative flex items-center justify-center w-full h-[10px] mt-2 rounded-[2px] bg-[#545454] text-[#e0e0e0]">
          <Plus className="absolute left-[4px] w-[6px] h-[6px]" strokeWidth={3} />
          <span className="pl-2">モディファイアーを追加</span>
        </button>
      </div>
    </div>
  </section>
);

/* ---------- status bar ---------- */

const MouseIcon = ({ part }) => (
  <Ico className="w-[9px] h-[9px]">
    <rect x="3" y="1" width="10" height="14" rx="3" />
    {part === 'left' && <path d="M3 2 H8 V7 H3 Z" fill="currentColor" />}
    {part === 'middle' && <path d="M8 3 V7" strokeWidth="2.400" />}
    {part === 'right' && <path d="M8 2 H13 V7 H8 Z" fill="currentColor" />}
  </Ico>
);

const StatusBar = () => (
  <footer className="flex items-center shrink-0 h-[11px] px-[5px] bg-[#181818] text-[#989898]">
    <div className="flex items-center gap-1 w-[112px]"><MouseIcon part="left" />辺ループ選択</div>
    <div className="flex items-center gap-1 w-[112px]"><MouseIcon part="middle" />マウス位置を視点の中心に</div>
    <MouseIcon part="right" />
    <p className="ml-auto whitespace-nowrap">
      StandingSignboard | 頂点:0/72 | 辺:0/109 | 面:0/44 | 三角面:88 | オブジェクト:1/1 | 4.1.0
    </p>
  </footer>
);

const App = () => (
  <div className="flex flex-col h-screen overflow-hidden bg-[#181818] text-[6px] leading-3 font-['Inter','Noto_Sans_CJK_JP',sans-serif]">
    <TitleBar />
    <TopBar />
    <div className="flex flex-1 min-h-0 gap-[2px] pl-[2px] pr-px">
      <div className="flex flex-col flex-1 min-w-0 gap-[3px]">
        <Viewport />
        <Timeline />
      </div>
      <aside className="flex flex-col gap-[2px] w-[176px] shrink-0">
        <Outliner />
        <Properties />
      </aside>
    </div>
    <StatusBar />
  </div>
);

export default App;
